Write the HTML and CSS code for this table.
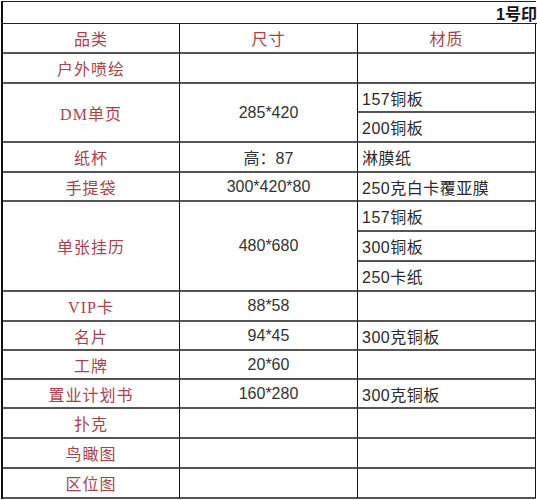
FILE: index.html
```html
<!DOCTYPE html>
<html lang="zh">
<head>
<meta charset="utf-8">
<link rel="stylesheet" href="styles.css">
</head>
<body>
<div class="sheet">
  <div class="title">1号印</div>

  <div class="c cat hd">品类</div>
  <div class="c cat hd">尺寸</div>
  <div class="c cat hd last">材质</div>

  <div class="c cat">户外喷绘</div>
  <div class="c num"></div>
  <div class="c mat last"></div>

  <div class="c cat span2">DM单页</div>
  <div class="c num span2">285*420</div>
  <div class="c mat last">157铜板</div>
  <div class="c mat last">200铜板</div>

  <div class="c cat">纸杯</div>
  <div class="c num">高：87</div>
  <div class="c mat last">淋膜纸</div>

  <div class="c cat">手提袋</div>
  <div class="c num">300*420*80</div>
  <div class="c mat last">250克白卡覆亚膜</div>

  <div class="c cat span3">单张挂历</div>
  <div class="c num span3">480*680</div>
  <div class="c mat last">157铜板</div>
  <div class="c mat last">300铜板</div>
  <div class="c mat last">250卡纸</div>

  <div class="c cat">VIP卡</div>
  <div class="c num">88*58</div>
  <div class="c mat last"></div>

  <div class="c cat">名片</div>
  <div class="c num">94*45</div>
  <div class="c mat last">300克铜板</div>

  <div class="c cat">工牌</div>
  <div class="c num">20*60</div>
  <div class="c mat last"></div>

  <div class="c cat">置业计划书</div>
  <div class="c num">160*280</div>
  <div class="c mat last">300克铜板</div>

  <div class="c cat">扑克</div>
  <div class="c num"></div>
  <div class="c mat last"></div>

  <div class="c cat">鸟瞰图</div>
  <div class="c num"></div>
  <div class="c mat last"></div>

  <div class="c cat">区位图</div>
  <div class="c num"></div>
  <div class="c mat last"></div>
</div>
</body>
</html>
```

FILE: styles.css
```css
html, body {
  margin: 0;
  padding: 0;
  background: #ffffff;
}

.sheet {
  margin: 1px 0 0 1px;
  width: 535px;
  box-sizing: border-box;
  border-top: 1px solid #222;
  border-left: 2px solid #111;
  display: grid;
  grid-template-columns: 177px 178px 178px;
  grid-template-rows: 22px 30px 30px 29px 30px 30px 29px 30px 30px 30px 30px 29px 29px 29px 30px 30px 30px;
  font-family: "Liberation Sans", "Noto Sans CJK SC", sans-serif;
  font-size: 16px;
}

.title {
  grid-column: 1 / span 3;
  border-bottom: 1px solid #222;
  text-align: right;
  font-family: "Liberation Sans", "Noto Sans CJK SC", sans-serif;
  font-weight: bold;
  font-size: 16px;
  line-height: 16px;
  padding-top: 5px;
  color: #111;
  white-space: nowrap;
  overflow: hidden;
  margin-right: -1px;
}

.c {
  box-sizing: border-box;
  border-right: 1px solid #111;
  border-bottom: 2px solid #555;
  display: flex;
  align-items: center;
  white-space: nowrap;
  overflow: hidden;
}

.cat {
  justify-content: center;
  color: #a8434e;
  letter-spacing: 1px;
  font-family: "Liberation Serif", "Noto Sans CJK SC", serif;
}

.hd {
  color: #a8434e;
}

.num {
  justify-content: center;
  color: #333;
}

.mat {
  justify-content: flex-start;
  padding-left: 4px;
  color: #2a2a2a;
  letter-spacing: 0.5px;
}

.last {
  border-right: 1px solid #111;
}

.span2 {
  grid-row: span 2;
}

.span3 {
  grid-row: span 3;
}
```
